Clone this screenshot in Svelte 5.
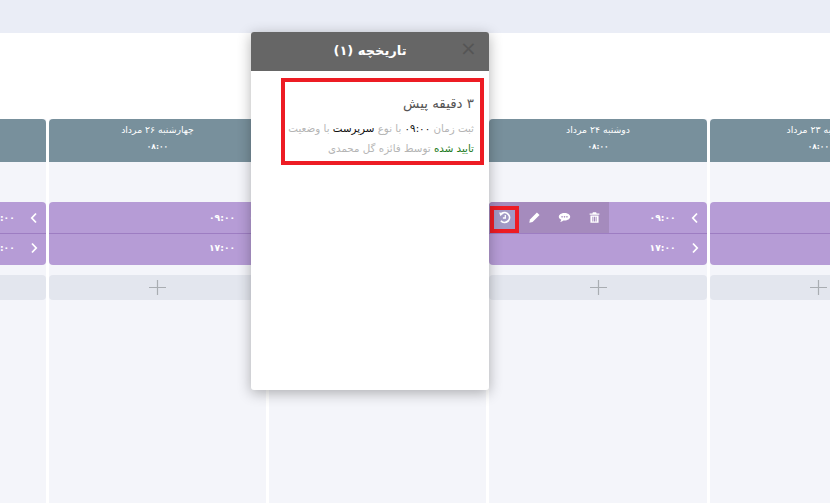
<script>
	const days = [
		{ title: 'یکشنبه ۲۳ مرداد', tools: false },
		{ title: 'دوشنبه ۲۴ مرداد', tools: true },
		{ title: 'سه‌شنبه ۲۵ مرداد', tools: false },
		{ title: 'چهارشنبه ۲۶ مرداد', tools: false },
		{ title: 'پنجشنبه ۲۷ مرداد', tools: false }
	];
</script>

<div class="page">
	<div class="topbar"></div>
	<div class="spacer"></div>
	<div class="board" dir="rtl">
		{#each days as day}
			<section class="day">
				<header class="day-head">
					<div>{day.title}</div>
					<div class="start">۰۸:۰۰</div>
				</header>
				<div class="shift">
					<div class="row">
						<svg class="chev" viewBox="0 0 8 12"><path d="M6 1.5 1.8 6 6 10.5" /></svg>
						<span class="time">۰۹:۰۰</span>
						{#if day.tools}
							<div class="tools" dir="ltr">
								<span class="tool history">
									<svg viewBox="0 0 16 16"><path class="line" d="M4.4 3.4A6 6 0 1 1 3.6 12" /><path class="solid" d="M1.4 1.8 7 2.4 3 6.6Z" /><path class="line thin" d="M9 5V8.6H6" /></svg>
								</span>
								<span class="tool">
									<svg viewBox="0 0 16 16"><path class="solid" d="M11 1.8 14.2 5 5.6 13.6 1.6 14.4 2.4 10.4Z" /></svg>
								</span>
								<span class="tool">
									<svg viewBox="0 0 16 16"><path class="solid" d="M8 2.6C12 2.6 15 4.6 15 7.2S12 11.8 8 11.8L6.6 11.7C5.6 12.8 4 13.4 2.6 13.4 3.4 12.6 3.9 11.6 4 10.8 2.2 10 1 8.7 1 7.2 1 4.6 4 2.6 8 2.6Z" /><circle class="dot" cx="5" cy="7.2" r="1" /><circle class="dot" cx="8" cy="7.2" r="1" /><circle class="dot" cx="11" cy="7.2" r="1" /></svg>
								</span>
								<span class="tool">
									<svg viewBox="0 0 16 16"><path class="solid" d="M6 1.6H10L10.6 3H14V4.6H2V3H5.4ZM3 5.6H13V14.4H3ZM5.4 7V13H6.6V7ZM7.4 7V13H8.6V7ZM9.4 7V13H10.6V7Z" fill-rule="evenodd" /></svg>
								</span>
							</div>
						{/if}
					</div>
					<div class="row">
						<svg class="chev" viewBox="0 0 8 12"><path d="M2 1.5 6.2 6 2 10.5" /></svg>
						<span class="time">۱۷:۰۰</span>
					</div>
				</div>
				<div class="add">
					<svg viewBox="0 0 17 15"><path d="M8.5 0V15M0 7.5H17" /></svg>
				</div>
			</section>
		{/each}
	</div>

	<aside class="modal" dir="rtl">
		<header class="modal-head">
			<span>تاریخچه (۱)</span>
			<span class="close">×</span>
		</header>
		<div class="entry">
			<h3>۳ دقیقه پیش</h3>
			<p>ثبت زمان <b>۰۹:۰۰</b> با نوع <b>سرپرست</b> با وضعیت <em>تایید شده</em> توسط فائزه گل محمدی</p>
		</div>
	</aside>
</div>

<style>
	:global(body) {
		margin: 0;
		background: #fff;
	}
	.page {
		position: relative;
		width: 830px;
		height: 503px;
		overflow: hidden;
		font-family: 'DejaVu Sans', sans-serif;
	}
	.topbar {
		height: 33px;
		background: #eaedf6;
	}
	.spacer {
		height: 86px;
	}
	.board {
		display: flex;
		gap: 3px;
		width: 1100px;
		height: 384px;
		margin-left: -173px;
	}
	.day {
		flex: 0 0 217.3px;
		background: #f4f5fa;
	}
	.day-head {
		height: 43px;
		padding-top: 4px;
		box-sizing: border-box;
		background: #78909c;
		border-radius: 4px 4px 0 0;
		color: #fff;
		font-size: 9.3px;
		line-height: 14px;
		text-align: center;
	}
	.start {
		margin-top: 4px;
		font-size: 7.5px;
		font-weight: bold;
		line-height: 12px;
	}
	.shift {
		margin-top: 40px;
		background: #b69cd6;
		border-radius: 4px;
		overflow: hidden;
	}
	.row {
		position: relative;
		display: flex;
		align-items: center;
		height: 31px;
		color: #fff;
		font-size: 10px;
	}
	.row + .row {
		height: 32px;
		padding-bottom: 4px;
		border-top: 1px solid #9d7dc2;
		box-sizing: border-box;
	}
	.chev {
		width: 8px;
		height: 12px;
		margin-right: 8px;
		fill: none;
		stroke: #fff;
		stroke-width: 1.8;
	}
	.time {
		margin-right: 15px;
		margin-bottom: 1px;
		font-size: 9.2px;
		font-weight: bold;
	}
	.tools {
		position: absolute;
		top: 0;
		left: 0;
		display: flex;
		align-items: center;
		width: 120px;
		height: 31px;
		background: #a58bbd;
	}
	.tool {
		display: flex;
		align-items: center;
		justify-content: center;
		width: 30px;
		height: 31px;
	}
	.tool svg {
		width: 13px;
		height: 13px;
	}
	.solid {
		fill: #fff;
	}
	.dot {
		fill: #a58bbd;
	}
	.line {
		fill: none;
		stroke: #fff;
		stroke-width: 2.2;
	}
	.line.thin {
		stroke-width: 1.6;
	}
	.history {
		box-sizing: border-box;
		align-items: flex-start;
		width: 29px;
		height: 27px;
		margin: 4px 0 0 1px;
		padding-top: 1px;
		border: 4px solid #ed1c24;
		background: #a29ac6;
	}
	.add {
		display: flex;
		align-items: center;
		justify-content: center;
		height: 25px;
		margin-top: 10px;
		background: #e3e6ee;
		border-radius: 4px;
	}
	.add svg {
		width: 17px;
		height: 15px;
		fill: none;
		stroke: #a9adb2;
		stroke-width: 1.2;
	}
	.modal {
		position: absolute;
		top: 32px;
		left: 251px;
		width: 238px;
		height: 358px;
		background: #fff;
		border-radius: 3px;
		box-shadow: 0 3px 14px rgba(0, 0, 0, 0.3);
	}
	.modal-head {
		position: relative;
		display: flex;
		align-items: center;
		justify-content: center;
		height: 39px;
		padding-bottom: 3px;
		box-sizing: border-box;
		background: #666;
		border-radius: 3px 3px 0 0;
		color: #fff;
		font-size: 13px;
		font-weight: bold;
	}
	.close {
		position: absolute;
		top: 6px;
		left: 209px;
		color: #555;
		font-size: 20px;
		font-weight: normal;
		line-height: 20px;
	}
	.entry {
		box-sizing: border-box;
		width: 203px;
		height: 87px;
		margin: 7px 5px 0 0;
		padding: 12px 6px 0 0;
		border: 4px solid #ed1c24;
	}
	h3 {
		margin: 0 0 4px;
		color: #555;
		font-size: 13.4px;
		line-height: 20px;
		font-weight: normal;
	}
	p {
		margin: 0;
		color: #b5b5b5;
		font-size: 10.3px;
		line-height: 20px;
	}
	b {
		color: #111;
		font-weight: normal;
	}
	em {
		color: #1a7a1a;
		font-style: normal;
	}
</style>
